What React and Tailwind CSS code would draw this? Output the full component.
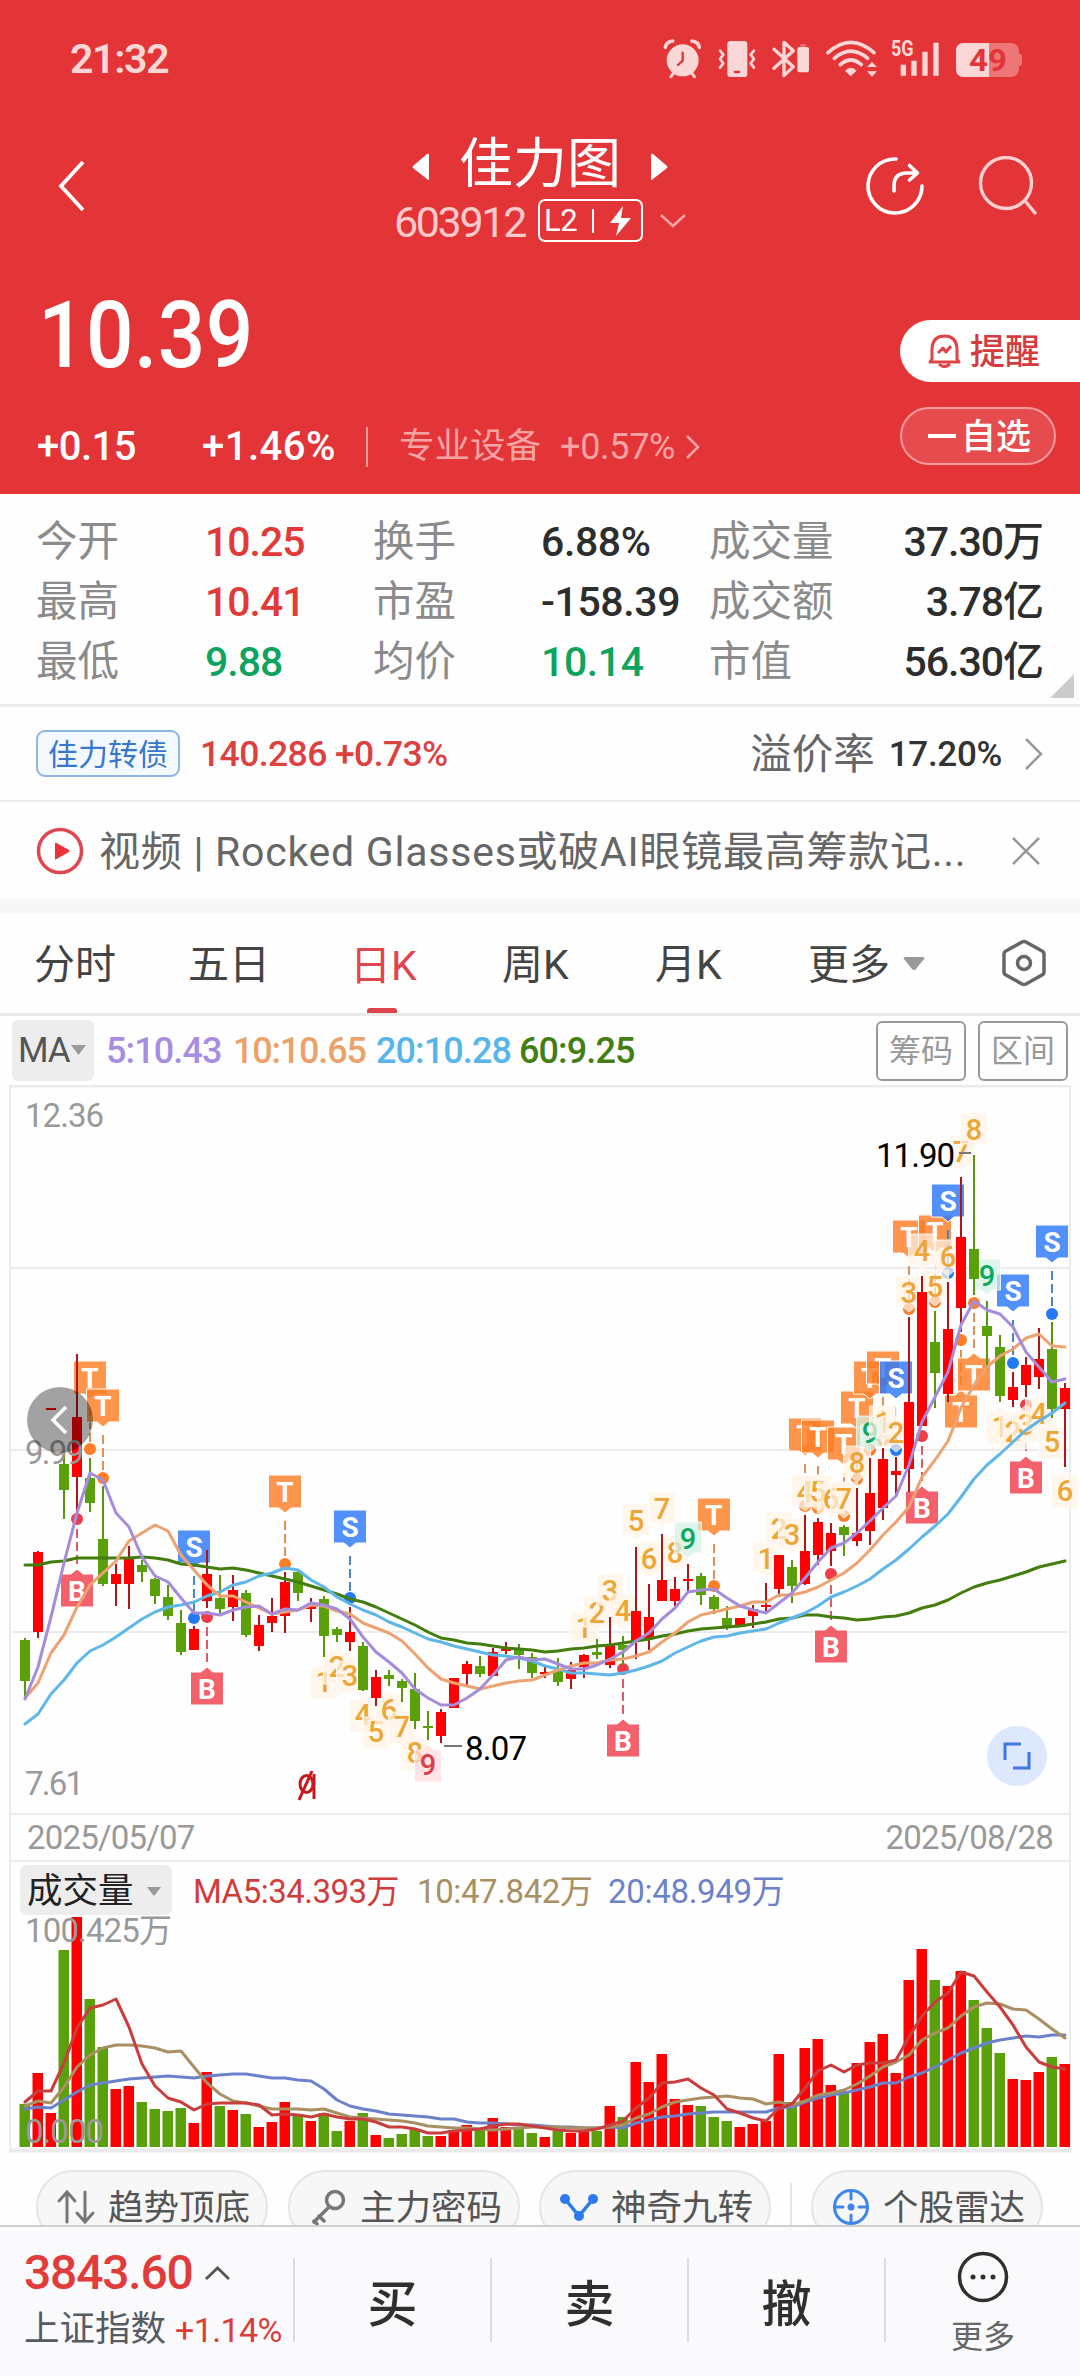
import React from "react";

const START_X = 25;
const STEP = 13;
const px = (i) => START_X + i * STEP;

// [up/down, high, body top, body bottom, low]
const candles = [
  ["g", 1638, 1640, 1681, 1697], ["r", 1551, 1552, 1632, 1638], ["r", 1409, 1408, 1410, 1409],
  ["g", 1452, 1464, 1490, 1519], ["r", 1354, 1417, 1477, 1513], ["g", 1458, 1478, 1503, 1512],
  ["g", 1486, 1539, 1584, 1586], ["r", 1564, 1574, 1584, 1606], ["r", 1546, 1558, 1584, 1609],
  ["g", 1560, 1565, 1572, 1582], ["g", 1578, 1579, 1596, 1604], ["g", 1585, 1597, 1616, 1620],
  ["g", 1610, 1623, 1652, 1655], ["r", 1626, 1629, 1650, 1650], ["r", 1550, 1574, 1601, 1608],
  ["g", 1575, 1598, 1609, 1614], ["r", 1575, 1590, 1607, 1621], ["g", 1590, 1593, 1635, 1637],
  ["r", 1615, 1625, 1646, 1651], ["r", 1598, 1616, 1623, 1632], ["r", 1572, 1582, 1616, 1633],
  ["g", 1570, 1572, 1593, 1601], ["r", 1598, 1606, 1609, 1622], ["g", 1596, 1599, 1636, 1657],
  ["g", 1627, 1629, 1635, 1642], ["r", 1607, 1632, 1642, 1651], ["g", 1642, 1646, 1690, 1691],
  ["r", 1670, 1677, 1698, 1706], ["g", 1670, 1675, 1679, 1686], ["g", 1679, 1681, 1688, 1702],
  ["g", 1673, 1689, 1721, 1729], ["g", 1711, 1726, 1728, 1740], ["r", 1709, 1712, 1736, 1743],
  ["r", 1678, 1678, 1708, 1708], ["r", 1661, 1664, 1674, 1686], ["g", 1656, 1666, 1674, 1677],
  ["r", 1648, 1652, 1676, 1676], ["r", 1642, 1649, 1651, 1654], ["g", 1644, 1649, 1655, 1669],
  ["g", 1653, 1657, 1673, 1678], ["r", 1666, 1672, 1674, 1678], ["g", 1658, 1671, 1682, 1686],
  ["r", 1662, 1670, 1679, 1689], ["r", 1654, 1655, 1667, 1678], ["g", 1639, 1652, 1655, 1659],
  ["r", 1617, 1645, 1665, 1668], ["g", 1636, 1645, 1650, 1665], ["r", 1547, 1611, 1641, 1659],
  ["r", 1584, 1617, 1639, 1650], ["r", 1534, 1580, 1601, 1601], ["r", 1577, 1589, 1601, 1606],
  ["r", 1564, 1579, 1581, 1593], ["g", 1573, 1576, 1595, 1605], ["g", 1595, 1597, 1609, 1614],
  ["g", 1606, 1618, 1627, 1630], ["r", 1618, 1618, 1627, 1627], ["r", 1605, 1609, 1616, 1628],
  ["r", 1583, 1605, 1607, 1613], ["r", 1555, 1555, 1589, 1597], ["g", 1560, 1567, 1586, 1603],
  ["r", 1515, 1551, 1584, 1585], ["r", 1518, 1522, 1555, 1565], ["r", 1523, 1533, 1551, 1566],
  ["g", 1525, 1527, 1535, 1556], ["r", 1488, 1533, 1541, 1546], ["r", 1458, 1493, 1531, 1545],
  ["r", 1448, 1459, 1508, 1520], ["r", 1457, 1471, 1475, 1497], ["r", 1317, 1402, 1469, 1492],
  ["r", 1276, 1292, 1426, 1426], ["g", 1311, 1342, 1373, 1408], ["r", 1282, 1329, 1394, 1402],
  ["r", 1177, 1237, 1308, 1332], ["g", 1155, 1249, 1279, 1295], ["g", 1301, 1326, 1336, 1370],
  ["g", 1335, 1347, 1396, 1402], ["r", 1372, 1387, 1400, 1407], ["r", 1357, 1365, 1385, 1397],
  ["r", 1328, 1359, 1377, 1389], ["g", 1322, 1349, 1409, 1418], ["r", 1383, 1388, 1409, 1467],
];

const priceLines = [
  {
    color: "#427d0e",
    points: [1565, 1565, 1562, 1561, 1558, 1558, 1558, 1558, 1558, 1557, 1558, 1560, 1564, 1565, 1567, 1569, 1568, 1570, 1573, 1576, 1579, 1582, 1586, 1590, 1594, 1599, 1602, 1607, 1613, 1619, 1625, 1632, 1638, 1640, 1643, 1644, 1646, 1648, 1649, 1650, 1652, 1651, 1649, 1648, 1646, 1645, 1643, 1641, 1639, 1636, 1634, 1631, 1629, 1628, 1627, 1626, 1624, 1622, 1619, 1618, 1615, 1615, 1617, 1618, 1620, 1619, 1617, 1616, 1613, 1608, 1605, 1600, 1593, 1587, 1583, 1580, 1576, 1572, 1567, 1564, 1561],
  },
  {
    color: "#5fb6e8",
    points: [1724, 1714, 1694, 1680, 1663, 1651, 1645, 1637, 1628, 1619, 1612, 1607, 1605, 1602, 1596, 1592, 1585, 1582, 1576, 1573, 1568, 1570, 1580, 1587, 1597, 1604, 1610, 1615, 1622, 1627, 1633, 1639, 1642, 1646, 1649, 1652, 1655, 1656, 1658, 1661, 1666, 1669, 1673, 1673, 1674, 1675, 1673, 1670, 1666, 1661, 1653, 1647, 1641, 1637, 1636, 1633, 1631, 1629, 1623, 1618, 1613, 1606, 1597, 1592, 1586, 1579, 1569, 1560, 1549, 1537, 1526, 1514, 1497, 1479, 1465, 1454, 1442, 1430, 1421, 1413, 1403],
  },
  {
    color: "#eca271",
    points: [1698, 1683, 1653, 1635, 1607, 1585, 1573, 1561, 1541, 1533, 1525, 1531, 1555, 1570, 1585, 1596, 1596, 1602, 1608, 1614, 1612, 1610, 1605, 1606, 1611, 1614, 1623, 1628, 1633, 1641, 1654, 1668, 1679, 1683, 1686, 1689, 1686, 1683, 1681, 1680, 1675, 1670, 1666, 1663, 1663, 1660, 1659, 1656, 1652, 1642, 1633, 1622, 1615, 1612, 1609, 1606, 1602, 1602, 1595, 1595, 1592, 1587, 1580, 1573, 1563, 1550, 1535, 1522, 1507, 1477, 1460, 1441, 1408, 1385, 1367, 1356, 1349, 1338, 1334, 1346, 1347],
  },
  {
    color: "#a58ddc",
    points: [1699, 1667, 1617, 1563, 1513, 1473, 1480, 1513, 1527, 1557, 1576, 1582, 1598, 1613, 1613, 1615, 1610, 1607, 1606, 1614, 1609, 1610, 1603, 1605, 1609, 1619, 1637, 1652, 1662, 1673, 1689, 1698, 1705, 1705, 1698, 1689, 1675, 1660, 1657, 1660, 1659, 1664, 1669, 1669, 1665, 1659, 1652, 1641, 1633, 1619, 1608, 1592, 1590, 1589, 1598, 1606, 1610, 1613, 1603, 1593, 1578, 1562, 1548, 1543, 1533, 1521, 1508, 1496, 1465, 1422, 1397, 1372, 1325, 1301, 1310, 1314, 1327, 1352, 1367, 1382, 1379],
  },
];

const volumes = [
  2104, 2073, 2113, 1950, 1917, 1999, 2047, 2089, 2086, 2102, 2109, 2111, 2108, 2123, 2072, 2106, 2110, 2114, 2127, 2122,
  2102, 2115, 2121, 2113, 2131, 2121, 2113, 2135, 2138, 2134, 2129, 2136, 2136, 2130, 2125, 2130, 2118, 2127, 2129, 2133,
  2137, 2131, 2133, 2132, 2131, 2106, 2117, 2062, 2082, 2054, 2099, 2105, 2106, 2117, 2121, 2127, 2124, 2121, 2054, 2102,
  2048, 2039, 2085, 2091, 2063, 2042, 2034, 2073, 1980, 1949, 1980, 1986, 1971, 2000, 2028, 2053, 2079, 2080, 2072, 2057, 2064,
];

const volumeLines = [
  {
    color: "#6b82ca",
    points: [2109, 2107, 2108, 2100, 2092, 2085, 2083, 2081, 2079, 2078, 2077, 2076, 2077, 2078, 2076, 2075, 2074, 2074, 2076, 2078, 2078, 2080, 2081, 2089, 2100, 2106, 2109, 2111, 2114, 2115, 2116, 2117, 2119, 2119, 2122, 2123, 2123, 2124, 2125, 2125, 2126, 2127, 2127, 2128, 2128, 2127, 2128, 2123, 2120, 2117, 2116, 2114, 2113, 2112, 2112, 2112, 2112, 2112, 2108, 2107, 2102, 2098, 2095, 2093, 2090, 2087, 2083, 2083, 2077, 2073, 2067, 2060, 2053, 2048, 2043, 2040, 2038, 2036, 2037, 2035, 2035],
  },
  {
    color: "#a98f62",
    points: [2106, 2101, 2103, 2087, 2067, 2055, 2048, 2045, 2045, 2046, 2048, 2052, 2051, 2067, 2083, 2094, 2101, 2103, 2106, 2109, 2109, 2109, 2110, 2109, 2113, 2117, 2118, 2119, 2120, 2121, 2123, 2126, 2127, 2128, 2128, 2129, 2130, 2129, 2128, 2127, 2127, 2127, 2128, 2128, 2128, 2127, 2125, 2118, 2114, 2107, 2102, 2100, 2098, 2097, 2096, 2098, 2099, 2104, 2102, 2105, 2101, 2095, 2093, 2090, 2084, 2076, 2067, 2062, 2055, 2040, 2033, 2028, 2016, 2007, 2003, 2004, 2009, 2010, 2019, 2029, 2038],
  },
  {
    color: "#c93d3d",
    points: [2102, 2091, 2091, 2063, 2028, 2008, 2005, 1999, 2027, 2064, 2086, 2098, 2102, 2110, 2104, 2103, 2103, 2103, 2105, 2115, 2114, 2115, 2117, 2114, 2117, 2119, 2119, 2122, 2127, 2127, 2129, 2133, 2133, 2131, 2130, 2129, 2126, 2124, 2124, 2126, 2128, 2130, 2131, 2131, 2129, 2125, 2121, 2108, 2098, 2083, 2082, 2079, 2088, 2095, 2109, 2113, 2118, 2121, 2108, 2104, 2088, 2071, 2065, 2072, 2065, 2063, 2063, 2060, 2037, 2016, 2002, 1993, 1972, 1976, 1992, 2007, 2025, 2047, 2062, 2067, 2069],
  },
];

// [letter, candle index, box top, dot y, box is below the dot]
const signals = [
  ["T", 5, 1361, 1449], ["T", 6, 1389, 1478], ["B", 4, 1574, 1519, true], ["S", 13, 1530, 1618],
  ["B", 14, 1672, 1617, true], ["T", 20, 1475, 1564], ["S", 25, 1510, 1598], ["B", 46, 1724, 1669, true],
  ["T", 53, 1498, 1586], ["B", 62, 1630, 1574, true], ["T", 60, 1418, 1506], ["T", 61, 1420, 1508],
  ["T", 63, 1427, 1516], ["T", 64, 1391, 1479], ["T", 65, 1361, 1450], ["T", 66, 1351, 1440],
  ["S", 67, 1361, 1450], ["T", 68, 1220, 1309], ["T", 70, 1215, 1302], ["S", 71, 1184, 1273],
  ["T", 72, 1395, 1340, true], ["T", 73, 1358, 1303, true], ["S", 76, 1274, 1363], ["S", 79, 1225, 1314],
  ["B", 69, 1491, 1436, true], ["B", 77, 1461, 1405, true],
];

const signalColors = {
  T: { box: "#fd7e24", dot: "#fd7e24", line: "#e29055" },
  S: { box: "#2c78fa", dot: "#2379f2", line: "#4a86c6" },
  B: { box: "#f03e4c", dot: "#ee3c49", line: "#dd5a68" },
};

// [number, candle index, text center y, box is below the candle]
const counts = [
  [1, 23, 1682, true], [2, 24, 1667, true], [3, 25, 1676, true], [4, 26, 1715, true], [5, 27, 1732, true],
  [6, 28, 1710, true], [7, 29, 1727, true], [8, 30, 1753, true], [9, 31, 1765, true],
  [1, 43, 1628], [2, 44, 1613], [3, 45, 1591], [4, 46, 1611], [5, 47, 1521], [6, 48, 1559],
  [7, 49, 1509], [8, 50, 1553], [9, 51, 1539],
  [1, 57, 1559], [2, 58, 1529], [3, 59, 1535], [4, 60, 1492], [5, 61, 1492], [6, 62, 1499],
  [7, 63, 1499], [8, 64, 1463], [9, 65, 1433],
  [1, 66, 1423], [2, 67, 1433], [3, 68, 1293], [4, 69, 1251], [5, 70, 1287], [6, 71, 1257],
  [7, 72, 1152], [8, 73, 1130], [9, 74, 1276],
  [1, 75, 1427, true], [2, 76, 1432, true], [3, 77, 1425, true], [4, 78, 1414, true],
  [5, 79, 1442, true], [6, 80, 1491, true],
];

const stats = [
  ["今开", "10.25", "text-[#e13a38]", "换手", "6.88%", "text-[#2d2d2d]", "成交量", "37.30万"],
  ["最高", "10.41", "text-[#e13a38]", "市盈", "-158.39", "text-[#2d2d2d]", "成交额", "3.78亿"],
  ["最低", "9.88", "text-[#0da45f]", "均价", "10.14", "text-[#0da45f]", "市值", "56.30亿"],
];

function StatusBar() {
  return (
    <div className="flex h-[118px] items-center justify-between pl-[70px] pr-[40px] text-[#fad6d6]">
      <span className="text-[41px] font-semibold leading-none tracking-[-1.3px]">21:32</span>
      <svg className="mt-[-18px] h-[60px] w-[390px]" viewBox="0 0 1170 180" fill="none" stroke="currentColor" strokeLinecap="round">
        <circle cx="98" cy="121" r="48" fill="currentColor" stroke="none" />
        <path d="M46 82Q48 66 68 63M148 82Q146 66 126 63" strokeWidth="11" />
        <path d="M70 160L63 170M126 160L133 170" strokeWidth="9" />
        <path d="M98 98V122L84 135" stroke="#e33537" strokeWidth="7" />
        <rect x="232" y="63" width="60" height="108" rx="10" fill="currentColor" stroke="none" />
        <path d="M255 156H267" stroke="#e33537" strokeWidth="7" />
        <path d="M210 92L220 104L210 117L220 130L210 143M312 92L302 104L312 117L302 130L312 143" strokeWidth="8" strokeLinejoin="round" />
        <path d="M372 88L430 140L402 167V67L430 92L372 145" strokeWidth="10" strokeLinejoin="round" />
        <rect x="442" y="81" width="35" height="76" rx="6" fill="currentColor" stroke="none" />
        <rect x="451" y="72" width="17" height="8" rx="3" fill="currentColor" stroke="none" opacity="0.4" />
        <path d="M534 98Q602 36 672 98M553 115Q602 72 653 115M571 134Q602 106 634 134" strokeWidth="11" />
        <path d="M585 152Q602 134 620 152L602 169Z" fill="currentColor" stroke="none" />
        <path d="M651 141L666 126L681 141ZM651 154L666 170L681 154Z" fill="currentColor" stroke="none" />
        <text x="723" y="107" textLength="68" lengthAdjust="spacingAndGlyphs" fontSize="64" fontWeight="700" fill="currentColor" stroke="none">5G</text>
        <path d="M760 134V167M792 122V167M825 95V167M858 68V167" strokeWidth="16" strokeLinecap="butt" />
        <rect x="918" y="69" width="189" height="102" rx="24" fill="#ee7677" stroke="none" />
        <path d="M942 69H1017V171H942Q918 171 918 147V93Q918 69 942 69Z" fill="currentColor" stroke="none" />
        <path d="M1107 101Q1116 101 1116 110V129Q1116 138 1107 138Z" fill="#ee7677" stroke="none" />
        <text x="957" y="153" textLength="114" lengthAdjust="spacingAndGlyphs" fontSize="92" fontWeight="700" fill="#e33537" stroke="none">49</text>
      </svg>
    </div>
  );
}

function TitleRow() {
  return (
    <div className="grid h-[136px] grid-cols-[1fr_auto_1fr] items-center">
      <svg className="ml-[57px] h-[52px] w-[30px]" viewBox="0 0 30 52" fill="none" stroke="white" strokeWidth="3.8">
        <path d="M26 2L4 26L26 50" />
      </svg>
      <div className="flex flex-col items-center">
        <div className="flex h-[64px] items-center gap-[29px]">
          <svg className="mt-[12px] h-[28px] w-[19px]" viewBox="0 0 19 28" fill="white">
            <path d="M18 2V26Q18 28 16 26L2 15Q1 14 2 13L16 1Q18 0 18 2Z" />
          </svg>
          <span className="pt-[9px] text-[54px] leading-none">佳力图</span>
          <svg className="mt-[12px] h-[28px] w-[19px]" viewBox="0 0 19 28" fill="white">
            <path d="M1 2V26Q1 28 3 26L17 15Q18 14 17 13L3 1Q1 0 1 2Z" />
          </svg>
        </div>
        <div className="mt-[5px] flex h-[46px] items-center">
          <span className="pt-[3px] text-[43px] leading-none tracking-[-2.3px] text-[#fccaca]">603912</span>
          <div className="ml-[13px] flex h-[43px] w-[105px] items-center rounded-[7px] border-[2.5px] border-white pl-[4px]">
            <span className="text-[31px] leading-none tracking-[-0.5px]">L2</span>
            <span className="ml-[15px] h-[24px] w-[2px] bg-white"></span>
            <svg className="ml-[15px] h-[30px] w-[23px]" viewBox="0 0 23 30" fill="white">
              <path d="M14 0L1 17H10L7 30L22 12H12Z" />
            </svg>
          </div>
          <svg className="ml-[17px] h-[16px] w-[26px]" viewBox="0 0 26 16" fill="none" stroke="#f6a3a3" strokeWidth="2.5">
            <path d="M1 2L13 13L25 2" />
          </svg>
        </div>
      </div>
      <div className="flex items-center justify-end gap-[52px] pr-[43px]">
        <svg className="h-[60px] w-[60px]" viewBox="0 0 60 60" fill="none" stroke="white" strokeWidth="3.6" strokeLinecap="round" strokeLinejoin="round">
          <path d="M31 3A27 27 0 1 0 57 30" />
          <path d="M29 35V30Q29 17 42 17H52M44.500 9.500L52.500 17L44.500 24" />
        </svg>
        <svg className="h-[60px] w-[60px]" viewBox="0 0 60 60" fill="none" stroke="#fcd0d0" strokeWidth="3.4" strokeLinecap="round">
          <circle cx="29" cy="27" r="25.500" />
          <path d="M49 46L58 57" />
        </svg>
      </div>
    </div>
  );
}

function PriceRow() {
  return (
    <div className="flex h-[240px] justify-between">
      <div className="pl-[37px]">
        <div className="ml-[1px] mt-[34px] w-[240px] origin-left scale-x-[0.9] text-[93px] font-medium leading-[96px] tracking-[0.5px]">10.39</div>
        <div className="mt-[39px] flex h-[48px] items-center leading-none">
          <span className="w-[165px] text-[40px] font-medium tracking-[-0.5px]">+0.15</span>
          <span className="text-[40px] font-medium tracking-[0.5px]">+1.46%</span>
          <span className="ml-[30px] h-[40px] w-[2px] bg-[#f09a9b]"></span>
          <span className="ml-[31px] text-[35.500px] text-[#f6a3a4]">专业设备</span>
          <span className="ml-[19px] text-[36px] tracking-[-0.3px] text-[#f6a3a4]">+0.57%</span>
          <svg className="ml-[11px] h-[26px] w-[14px]" viewBox="0 0 14 26" fill="none" stroke="#f6a3a4" strokeWidth="2.5">
            <path d="M1 2L12 13L1 24" />
          </svg>
        </div>
      </div>
      <div className="flex flex-col pt-[66px]">
        <div className="flex h-[62px] w-[180px] items-center rounded-l-full bg-white pl-[28px] text-[#d43c40]">
          <svg className="h-[34px] w-[33px]" viewBox="0 0 33 34" fill="none" stroke="#df4449" strokeWidth="3" strokeLinejoin="round">
            <path d="M4 25V14Q5 2 16.500 2Q28 2 29 14V25L31 28H2Z" />
            <path d="M11 30Q16 35 22 30" />
            <path d="M10 19L15 14L18 18L23 12" />
          </svg>
          <span className="ml-[9px] pt-[3px] text-[35px] font-medium leading-none">提醒</span>
        </div>
        <div className="mt-[25px] flex h-[58px] w-[156px] items-center rounded-full border-2 border-[#f29a9b] bg-[#e64b4d] pl-[26px]">
          <span className="h-[4px] w-[28px] bg-white"></span>
          <span className="ml-[5px] pt-[3px] text-[35px] font-medium leading-none">自选</span>
        </div>
      </div>
    </div>
  );
}

function Stats() {
  return (
    <div className="relative flex h-[213px] flex-col border-b-[3px] border-[#ececec] pt-[18px]">
      {stats.map((row) => (
        <div key={row[0]} className="grid h-[60px] grid-cols-[169px_168px_168px_168px_130px_1fr] items-center pl-[36px] pr-[37px] text-[41px] leading-none">
          <span className="text-[41.500px] text-[#8b8b8b]">{row[0]}</span>
          <span className={`font-medium tracking-[-1px] ${row[2]}`}>{row[1]}</span>
          <span className="text-[41.500px] text-[#8b8b8b]">{row[3]}</span>
          <span className={`whitespace-nowrap font-medium tracking-[-0.400px] ${row[5]}`}>{row[4]}</span>
          <span className="whitespace-nowrap text-[41.500px] text-[#8b8b8b]">{row[6]}</span>
          <span className="whitespace-nowrap text-right font-medium tracking-[-1px] text-[#2d2d2d]">{row[7]}</span>
        </div>
      ))}
      <svg className="absolute bottom-[6px] right-[6px] h-[24px] w-[24px]" viewBox="0 0 24 24" fill="#cbcbcb">
        <path d="M24 0V24H0Z" />
      </svg>
    </div>
  );
}

function BondRow() {
  return (
    <div className="flex h-[95px] items-center border-b-2 border-[#ececec] pl-[36px] pr-[37px] leading-none">
      <span className="flex h-[47px] w-[144px] items-center justify-center rounded-[9px] border-2 border-[#8fb3e6] bg-[#f4f9ff] pt-[2px] text-[30px] text-[#3777cc]">佳力转债</span>
      <span className="ml-[20px] pt-[2px] text-[35.500px] font-medium tracking-[-0.6px] text-[#dc413f]">140.286 +0.73%</span>
      <span className="ml-auto pt-[3px] text-[41.500px] text-[#666]">溢价率</span>
      <span className="ml-[14px] pt-[2px] text-[35px] font-medium tracking-[-0.3px] text-[#333]">17.20%</span>
      <svg className="ml-[22px] h-[32px] w-[19px]" viewBox="0 0 19 32" fill="none" stroke="#999" strokeWidth="2.5">
        <path d="M2 1L17 16L2 31" />
      </svg>
    </div>
  );
}

function NewsRow() {
  return (
    <div className="flex h-[97px] items-center pl-[36px] pr-[40px]">
      <svg className="h-[48px] w-[48px]" viewBox="0 0 48 48">
        <circle cx="24" cy="24" r="21.500" fill="none" stroke="#e04650" strokeWidth="3.500" />
        <path d="M19 16.500Q19 15 20.500 16L33 23Q34 24 33 25L20.500 32Q19 33 19 31.500Z" fill="#f0303a" />
      </svg>
      <span className="ml-[15px] flex-1 whitespace-nowrap pt-[3px] text-[41px] leading-none tracking-[0.750px] text-[#666]">视频 | Rocked Glasses或破AI眼镜最高筹款记...</span>
      <svg className="h-[28px] w-[28px]" viewBox="0 0 28 28" fill="none" stroke="#999" strokeWidth="2.5">
        <path d="M1 1L27 27M27 1L1 27" />
      </svg>
    </div>
  );
}

function Tabs() {
  return (
    <div className="flex h-[103px] items-center border-b-[3px] border-[#eaeaea] pl-[34px] text-[41px] leading-none text-[#444]">
      <span className="w-[154px] pt-[4px]">分时</span>
      <span className="w-[162px] pt-[4px]">五日</span>
      <span className="flex h-full w-[152px] flex-col justify-between text-[#e0444d]">
        <span className="pt-[33px]">日K</span>
        <span className="ml-[17px] h-[5px] w-[30px] rounded-t-[3px] bg-[#dc444c]"></span>
      </span>
      <span className="w-[153px] pt-[4px]">周K</span>
      <span className="w-[153px] pt-[4px]">月K</span>
      <span className="pt-[4px]">更多</span>
      <svg className="ml-[13px] h-[15px] w-[22px]" viewBox="0 0 22 15" fill="#999">
        <path d="M2 1H20Q22 1 21 3L13 13Q11 15 9 13L1 3Q0 1 2 1Z" />
      </svg>
      <svg className="ml-[77px] h-[48px] w-[44px]" viewBox="0 0 44 48" fill="none" stroke="#666" strokeWidth="3.500" strokeLinejoin="round">
        <path d="M20 3Q22 2 24 3L40 12Q42 13 42 15V33Q42 35 40 36L24 45Q22 46 20 45L4 36Q2 35 2 33V15Q2 13 4 12Z" />
        <circle cx="22" cy="24" r="6.500" />
      </svg>
    </div>
  );
}

function MaRow() {
  return (
    <div className="flex h-[69px] items-center pl-[12px] pr-[12px] text-[36px] font-medium leading-none tracking-[-0.9px]">
      <span className="flex h-[61px] w-[82px] items-center rounded-[6px] bg-[#ededed] pl-[6px] text-[35px] font-normal tracking-[-1px] text-[#555]">
        MA
        <svg className="mb-[2px] ml-[1px] h-[10px] w-[15px] shrink-0" viewBox="0 0 15 10" fill="#999">
          <path d="M0 0H15L7.500 10Z" />
        </svg>
      </span>
      <span className="ml-[12px] w-[127px] pt-[1px] text-[#a78ddf]">5:10.43</span>
      <span className="w-[143px] pt-[1px] tracking-[-1.2px] text-[#eba269]">10:10.65</span>
      <span className="w-[143px] pt-[1px] text-[#58b5ea]">20:10.28</span>
      <span className="pt-[1px] text-[#437e12]">60:9.25</span>
      <span className="ml-auto flex h-[60px] w-[90px] items-center justify-center rounded-[6px] border-2 border-[#999] pt-[1px] text-[32px] font-normal tracking-normal text-[#999]">筹码</span>
      <span className="ml-[12px] flex h-[60px] w-[90px] items-center justify-center rounded-[6px] border-2 border-[#999] pt-[1px] text-[32px] font-normal tracking-normal text-[#999]">区间</span>
    </div>
  );
}

function Line({ points, color }) {
  return (
    <polyline
      points={points.map((y, i) => `${px(i)},${y}`).join(" ")}
      fill="none"
      stroke={color}
      strokeWidth="3"
      strokeLinejoin="round"
      strokeLinecap="round"
    />
  );
}

function Signal({ letter, i, top, dot, below }) {
  const x = px(i);
  const c = signalColors[letter];
  const box = below
    ? `M${x - 16.5} ${top}H${x - 6}L${x} ${top - 5}L${x + 6} ${top}H${x + 16.5}V${top + 33}H${x - 16.5}Z`
    : `M${x - 16.5} ${top}H${x + 16.5}V${top + 33}H${x + 6}L${x} ${top + 38}L${x - 6} ${top + 33}H${x - 16.5}Z`;
  return (
    <g>
      <line x1={x} x2={x} y1={below ? top - 10 : top + 46} y2={dot} stroke={c.line} strokeWidth="2" strokeDasharray="9 4" />
      <circle cx={x} cy={dot} r="6" fill={c.dot} />
      <path d={box} fill={c.box} fillOpacity="0.82" stroke="white" strokeWidth="1" />
      <text x={x} y={top + 26.5} textAnchor="middle" fontSize="28" fontWeight="700" fill="white">{letter}</text>
    </g>
  );
}

function Count({ n, i, y, below }) {
  const x = px(i);
  const top = below ? y - 15 : y - 17;
  const bottom = below ? y + 17 : y + 14;
  let color = "#eda535";
  let bg = "#fff3e4";
  if (n === 9) {
    color = below ? "#d9404a" : "#0ea863";
    bg = below ? "#ffdadd" : "#d3f1e3";
  }
  const box = below
    ? `M${x - 13.5} ${top}H${x - 6}L${x} ${top - 5}L${x + 6} ${top}H${x + 13.5}V${bottom}H${x - 13.5}Z`
    : `M${x - 13.5} ${top}H${x + 13.5}V${bottom}H${x + 6}L${x} ${bottom + 5}L${x - 6} ${bottom}H${x - 13.5}Z`;
  return (
    <g>
      <path d={box} fill={bg} fillOpacity="0.72" stroke="white" strokeOpacity="0.8" strokeWidth="1" />
      <text x={x} y={y + 10} textAnchor="middle" fontSize="29" fontWeight="500" fill={color}>{n}</text>
    </g>
  );
}

function PriceChart() {
  return (
    <svg className="block h-[728px] w-[1080px]" viewBox="0 1085 1080 728">
      <g fill="none" stroke="#ebebeb" strokeWidth="2">
        <path d="M9 1086H1071" strokeWidth="3" />
        <path d="M10 1268H1070M10 1450H1070M10 1632H1070" />
        <path d="M10 1086V1813M1070 1086V1813" />
      </g>
      {signals.map(([letter, i, top, dot, below]) => (
        <Signal key={i} letter={letter} i={i} top={top} dot={dot} below={below} />
      ))}
      {counts.map(([n, i, y, below]) => (
        <Count key={i} n={n} i={i} y={y} below={below} />
      ))}
      {candles.map(([kind, high, top, bottom, low], i) => (
        <g key={i}>
          <line x1={px(i)} x2={px(i)} y1={high} y2={low} stroke={kind === "r" ? "#b01518" : "#57980c"} strokeWidth="2" />
          <rect x={px(i) - 5} y={top} width="10" height={bottom - top} fill={kind === "r" ? "#fe0000" : "#5aa00b"} />
        </g>
      ))}
      {priceLines.map((line) => (
        <Line key={line.color} {...line} />
      ))}
      <g fontSize="33" fill="#999">
        <text x="25" y="1127" textLength="79">12.36</text>
        <text x="25" y="1464" textLength="59">9.99</text>
        <text x="25" y="1795" textLength="59">7.61</text>
      </g>
      <g fontSize="33" fill="#000">
        <text x="876" y="1167" textLength="79">11.90</text>
        <text x="465" y="1760" textLength="62">8.07</text>
      </g>
      <path d="M959 1153H971M444 1746H462" stroke="#777" strokeWidth="2" />
      <g fill="none" stroke="#c8181c" strokeWidth="3">
        <ellipse cx="306.500" cy="1784" rx="6.500" ry="8.500" />
        <path d="M314 1774V1799M299 1800L312 1771" />
      </g>
      <circle cx="60" cy="1420" r="33" fill="#000" fillOpacity="0.36" />
      <path d="M66 1407L53 1420L66 1433" fill="none" stroke="white" strokeWidth="3.500" />
      <circle cx="1017" cy="1756" r="30" fill="#dee8fd" />
      <path d="M1021 1744H1005V1760M1013 1768H1029V1752" fill="none" stroke="#3c78dd" strokeWidth="3" />
    </svg>
  );
}

function VolumeChart() {
  return (
    <svg className="block h-[238px] w-[1080px]" viewBox="0 1915 1080 238">
      <path d="M10 1915V2150M1070 1915V2150" stroke="#ebebeb" strokeWidth="2" />
      <path d="M9 2150.500H1071" stroke="#eaeaea" strokeWidth="4" />
      {volumes.map((y, i) => (
        <rect key={i} x={px(i) - 5.5} y={y} width="10.5" height={2147 - y} fill={candles[i][0] === "r" ? "#fe0000" : "#5aa00b"} />
      ))}
      {volumeLines.map((line) => (
        <Line key={line.color} {...line} />
      ))}
      <g fontSize="33" fill="#999">
        <text x="25" y="1942" textLength="147">100.425万</text>
        <text x="25" y="2143" textLength="79">0.000</text>
      </g>
    </svg>
  );
}

function Chart() {
  return (
    <div>
      <PriceChart />
      <div className="mx-[9px] flex h-[49px] items-center justify-between border-2 border-[#ebebeb] pl-[16px] pr-[16px] text-[33px] leading-none tracking-[-0.8px] text-[#999]">
        <span>2025/05/07</span>
        <span>2025/08/28</span>
      </div>
      <div className="mx-[9px] flex h-[53px] items-center border-x-2 border-[#ebebeb] pl-[9px] pt-[3px] text-[33px] leading-none">
        <span className="flex h-[50px] w-[152px] items-center rounded-[7px] bg-[#ededed] pl-[7px] pt-[3px] text-[35.500px] text-[#222]">
          成交量
          <svg className="ml-[13px] h-[9px] w-[14px]" viewBox="0 0 14 9" fill="#999">
            <path d="M0 0H14L8 8Q7 9 6 8Z" />
          </svg>
        </span>
        <span className="ml-[21px] w-[224px] pt-[2px] tracking-[-0.5px] text-[#d03c3b]">MA5:34.393万</span>
        <span className="w-[191px] pt-[2px] tracking-[-0.4px] text-[#a98f62]">10:47.842万</span>
        <span className="pt-[2px] tracking-[-0.3px] text-[#6b82ca]">20:48.949万</span>
      </div>
      <VolumeChart />
    </div>
  );
}

function Chip({ label, children }) {
  return (
    <div className="flex h-[74px] w-[232px] shrink-0 items-center rounded-full border-2 border-[#e5e5e5] bg-[#f7f7f7] pl-[18px] text-[35.500px] leading-none text-[#555]">
      <svg className="h-[40px] w-[40px] shrink-0" viewBox="0 0 40 40" fill="none" stroke="#777" strokeWidth="3.500" strokeLinecap="round">
        {children}
      </svg>
      <span className="ml-[12px] whitespace-nowrap pt-[3px]">{label}</span>
    </div>
  );
}

function Chips() {
  return (
    <div className="flex h-[72px] overflow-hidden pl-[36px] pt-[17px]">
      <Chip label="趋势顶底">
        <path d="M11 35V6M3 14L11 5L19 14M29 5V34M21 26L29 35L37 26" strokeWidth="3" />
      </Chip>
      <span className="w-[20px] shrink-0"></span>
      <Chip label="主力密码">
        <circle cx="27" cy="13" r="8.500" />
        <path d="M21 20L6 35M11 29L16 34M6 34L9 37" />
      </Chip>
      <span className="w-[19px] shrink-0"></span>
      <Chip label="神奇九转">
        <path d="M6 12L20 29L34 12" stroke="#2c79f0" />
        <g fill="#2c79f0" stroke="none">
          <circle cx="6" cy="12" r="5" />
          <circle cx="20" cy="29" r="5" />
          <circle cx="34" cy="12" r="5" />
        </g>
      </Chip>
      <span className="mx-[19px] mt-[13px] h-[60px] w-[2px] shrink-0 bg-[#e5e5e5]"></span>
      <Chip label="个股雷达">
        <g stroke="#3f85ea" strokeWidth="3">
          <circle cx="20" cy="20" r="16.500" />
          <path d="M20 4V12M20 28V36M4 20H12M28 20H36" />
        </g>
        <circle cx="20" cy="20" r="3.500" fill="#3f85ea" stroke="none" />
      </Chip>
    </div>
  );
}

function BottomBar() {
  return (
    <div className="flex h-[151px] border-t-2 border-[#cfcfd2] bg-[#fafafc]">
      <div className="w-[293px] shrink-0 pl-[24px] pt-[22px] leading-none">
        <div className="flex items-center">
          <span className="text-[48px] font-medium tracking-[-1.2px] text-[#e13c3a]">3843.60</span>
          <svg className="ml-[12px] h-[15px] w-[25px]" viewBox="0 0 25 15" fill="none" stroke="#555" strokeWidth="2.800">
            <path d="M1 13L12.500 2L24 13" />
          </svg>
        </div>
        <div className="mt-[15px] flex items-center whitespace-nowrap">
          <span className="text-[35.500px] text-[#555a63]">上证指数</span>
          <span className="ml-[9px] text-[34px] tracking-[-0.6px] text-[#dc3c3a]">+1.14%</span>
        </div>
      </div>
      {["买", "卖", "撤"].map((label) => (
        <div key={label} className="flex w-[197px] shrink-0 pt-[31px]">
          <span className="h-[84px] w-[2px] bg-[#dcdcde]"></span>
          <span className="flex-1 pt-[22px] text-center text-[50px] font-medium leading-none text-[#2f2f2f]">{label}</span>
        </div>
      ))}
      <div className="flex flex-1 pt-[31px]">
        <span className="h-[84px] w-[2px] bg-[#dcdcde]"></span>
        <div className="mt-[-7px] flex flex-1 flex-col items-center">
          <svg className="h-[52px] w-[52px]" viewBox="0 0 52 52">
            <circle cx="26" cy="26" r="23.500" fill="none" stroke="#2f2f2f" strokeWidth="3.500" />
            <g fill="#2f2f2f">
              <circle cx="16" cy="26" r="2.500" />
              <circle cx="26" cy="26" r="2.500" />
              <circle cx="36" cy="26" r="2.500" />
            </g>
          </svg>
          <span className="mt-[18px] text-[32px] leading-none text-[#666]">更多</span>
        </div>
      </div>
    </div>
  );
}

export default function App() {
  return (
    <div className="h-[2376px] w-[1080px] overflow-hidden bg-[#fefefe] font-['Roboto','Noto_Sans_CJK_SC',sans-serif]">
      <div className="h-[494px] bg-[#e33537] text-white">
        <StatusBar />
        <TitleRow />
        <PriceRow />
      </div>
      <Stats />
      <BondRow />
      <NewsRow />
      <div className="h-[14px] bg-[#f7f7f7]"></div>
      <Tabs />
      <MaRow />
      <Chart />
      <Chips />
      <BottomBar />
    </div>
  );
}
